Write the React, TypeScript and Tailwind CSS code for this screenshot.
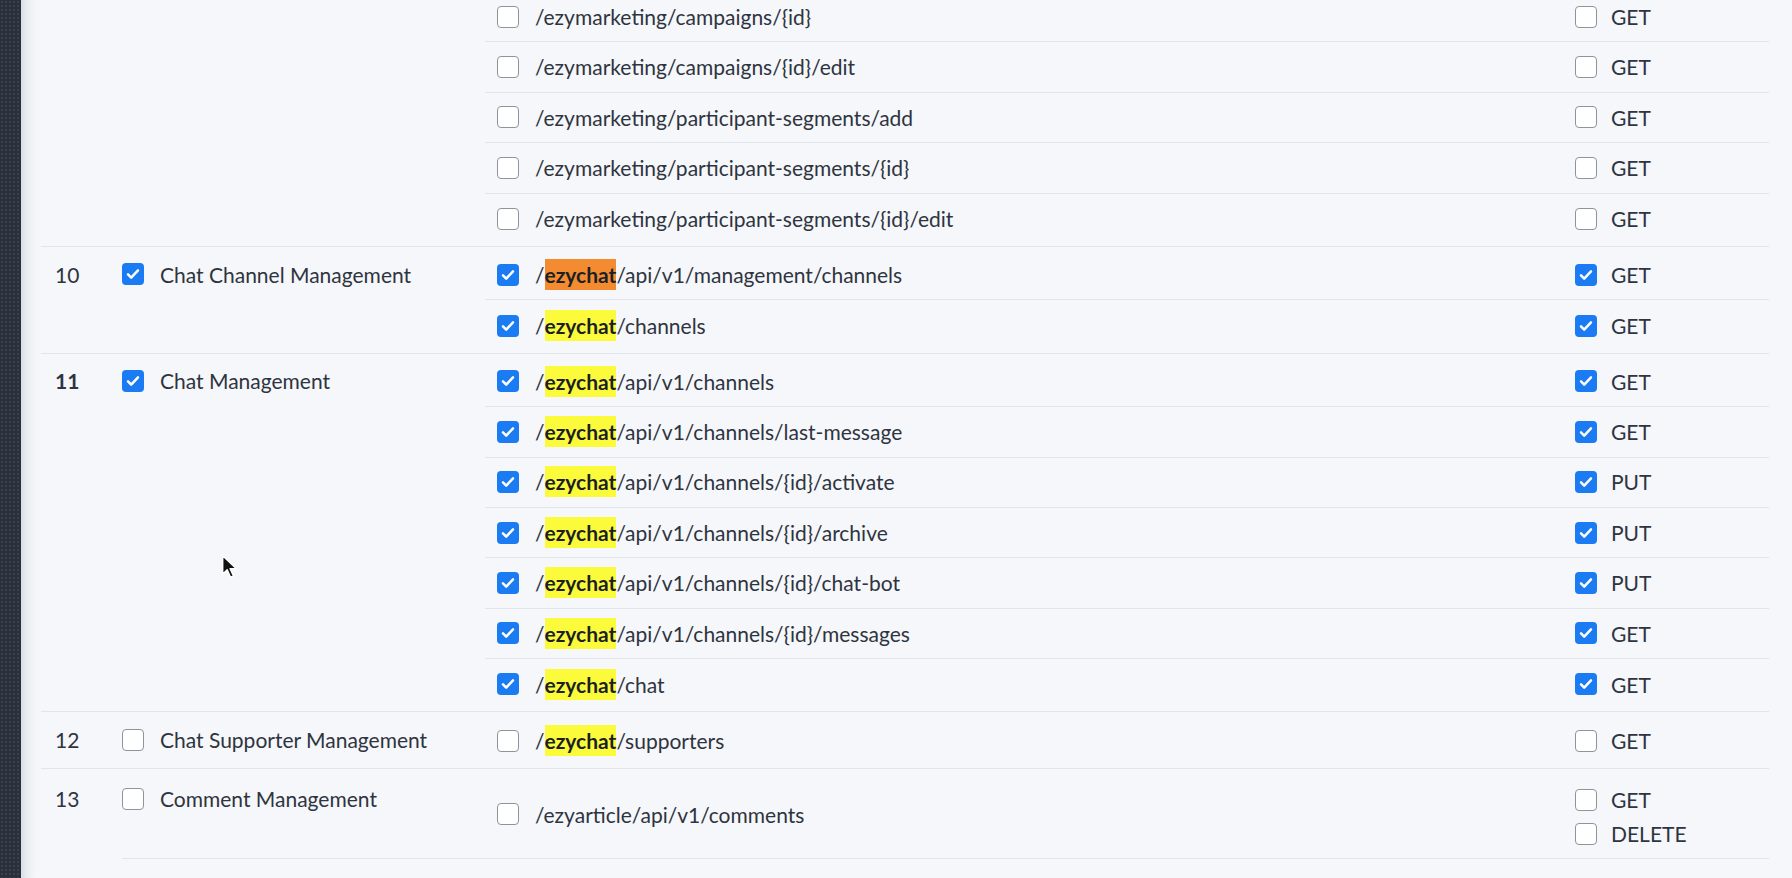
import React from "react";

type Route = { path: string; methods: { name: string; checked: boolean }[]; checked: boolean };
type Group = {
  no?: string;
  name?: string;
  checked?: boolean;
  bold?: boolean;
  routes: Route[];
};

const get = (checked: boolean) => [{ name: "GET", checked }];
const put = (checked: boolean) => [{ name: "PUT", checked }];

const groups: Group[] = [
  {
    routes: [
      { path: "/ezymarketing/campaigns/{id}", methods: get(false), checked: false },
      { path: "/ezymarketing/campaigns/{id}/edit", methods: get(false), checked: false },
      { path: "/ezymarketing/participant-segments/add", methods: get(false), checked: false },
      { path: "/ezymarketing/participant-segments/{id}", methods: get(false), checked: false },
      { path: "/ezymarketing/participant-segments/{id}/edit", methods: get(false), checked: false },
    ],
  },
  {
    no: "10",
    name: "Chat Channel Management",
    checked: true,
    routes: [
      { path: "/ezychat/api/v1/management/channels", methods: get(true), checked: true },
      { path: "/ezychat/channels", methods: get(true), checked: true },
    ],
  },
  {
    no: "11",
    name: "Chat Management",
    checked: true,
    bold: true,
    routes: [
      { path: "/ezychat/api/v1/channels", methods: get(true), checked: true },
      { path: "/ezychat/api/v1/channels/last-message", methods: get(true), checked: true },
      { path: "/ezychat/api/v1/channels/{id}/activate", methods: put(true), checked: true },
      { path: "/ezychat/api/v1/channels/{id}/archive", methods: put(true), checked: true },
      { path: "/ezychat/api/v1/channels/{id}/chat-bot", methods: put(true), checked: true },
      { path: "/ezychat/api/v1/channels/{id}/messages", methods: get(true), checked: true },
      { path: "/ezychat/chat", methods: get(true), checked: true },
    ],
  },
  {
    no: "12",
    name: "Chat Supporter Management",
    checked: false,
    routes: [{ path: "/ezychat/supporters", methods: get(false), checked: false }],
  },
];

const Checkbox = ({ checked }: { checked: boolean }) =>
  checked ? (
    <span className="w-[22px] h-[22px] shrink-0 rounded-[4px] bg-[#1a7bf3] flex items-center justify-center">
      <svg viewBox="0 0 16 16" className="w-[16px] h-[16px]" fill="none">
        <path d="M3 8.4l3.2 3.3 6.8-7.4" stroke="#fff" strokeWidth="2.5" strokeLinecap="round" strokeLinejoin="round" />
      </svg>
    </span>
  ) : (
    <span className="w-[22px] h-[22px] shrink-0 rounded-[4px] bg-white border-[1.5px] border-[#8f949c]" />
  );

const PathText = ({ path, current }: { path: string; current: boolean }) => {
  if (!path.startsWith("/ezychat/")) return <span>{path}</span>;
  return (
    <span>
      /
      <span
        className={`font-bold text-[#1c1f24] py-[3px] ${current ? "bg-[#f38b31]" : "bg-[#fbfb3c]"}`}
      >
        ezychat
      </span>
      {path.slice(8)}
    </span>
  );
};

const Method = ({ name, checked }: { name: string; checked: boolean }) => (
  <div className="flex items-center gap-[14px] h-[22px]">
    <Checkbox checked={checked} />
    <span>{name}</span>
  </div>
);

let first = true;

const GroupRow = ({ g }: { g: Group }) => (
  <div className="grid grid-cols-[81px_363px_1fr] border-b border-[#e1e4e9] pt-[3px] pb-[2px]">
    <div className={`pl-[14px] h-[49px] flex items-center ${g.bold ? "font-bold" : ""}`}>{g.no}</div>
    <div className="h-[49px] flex items-center gap-[16px]">
      {g.name && (
        <>
          <Checkbox checked={!!g.checked} />
          <span>{g.name}</span>
        </>
      )}
    </div>
    <div>
      {g.routes.map((r, i) => {
        const current = first && r.path.startsWith("/ezychat/");
        if (current) first = false;
        return (
          <div
            key={r.path}
            className={`grid grid-cols-[1fr_206px] h-[50.4px] ${i < g.routes.length - 1 ? "border-b border-[#e1e4e9]" : ""}`}
          >
            <div className="flex items-center gap-[16px] pl-[12px]">
              <Checkbox checked={r.checked} />
              <PathText path={r.path} current={current} />
            </div>
            <div className="flex items-center pl-[12px]">
              {r.methods.map((m) => (
                <Method key={m.name} {...m} />
              ))}
            </div>
          </div>
        );
      })}
    </div>
  </div>
);

const App = () => {
  first = true;
  return (
    <div
      className="w-[1792px] h-[878px] overflow-hidden flex bg-[#f5f7fa] text-[#2e3440] text-[21px]"
      style={{ fontFamily: "Lato, 'Noto Sans', sans-serif" }}
    >
      <div className="w-[21px] shrink-0 bg-[#2a303b] bg-[radial-gradient(#3a414d_0.8px,transparent_0.8px)] bg-[length:4px_4px]" />
      <div className="relative flex-1 pl-[20px] pr-[23px] bg-[linear-gradient(to_right,#dadee5_0px,#e9edf2_6px,#f5f7fa_16px)]">
        <div className="-mt-[11px]">
          {groups.map((g, i) => (
            <GroupRow key={i} g={g} />
          ))}
          {/* 13 */}
          <div className="grid grid-cols-[81px_1fr] pt-[2px]">
            <div className="pl-[14px] h-[56px] flex items-center">13</div>
            <div className="grid grid-cols-[363px_1fr] border-b border-[#e1e4e9] h-[88px]">
              <div className="h-[56px] flex items-center gap-[16px]">
                <Checkbox checked={false} />
                <span>Comment Management</span>
              </div>
              <div className="grid grid-cols-[1fr_206px]">
                <div className="flex items-center gap-[16px] pl-[12px]">
                  <Checkbox checked={false} />
                  <span>/ezyarticle/api/v1/comments</span>
                </div>
                <div className="flex flex-col pl-[12px] pt-[18px] gap-[12px]">
                  <Method name="GET" checked={false} />
                  <Method name="DELETE" checked={false} />
                </div>
              </div>
            </div>
          </div>
        </div>
        {/* mouse cursor */}
        <svg className="absolute left-[200px] top-[554px] w-[18px] h-[25px]" viewBox="0 0 16 22">
          <path d="M1.5 1.5v16.5l4-4 3 6.5 2.6-1.2-3-6.3h5.6z" fill="#111" stroke="#fff" strokeWidth="1.3" strokeLinejoin="round" />
        </svg>
      </div>
    </div>
  );
};

export default App;
